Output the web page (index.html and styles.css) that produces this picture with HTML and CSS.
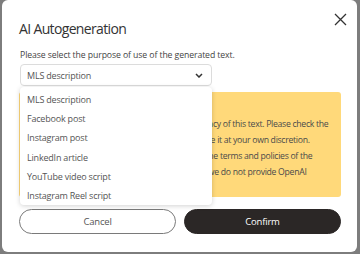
FILE: index.html
```html
<!DOCTYPE html>
<html>
<head>
<meta charset="utf-8">
<link rel="stylesheet" href="styles.css">
</head>
<body>
<div class="modal">
  <button class="close" aria-label="Close">
    <svg width="13" height="13" viewBox="0 0 13 13"><path d="M1 1L12 12M12 1L1 12" stroke="#333" stroke-width="1.3" fill="none"/></svg>
  </button>
  <h1 class="title">AI Autogeneration</h1>
  <p class="lead">Please select the purpose of use of the generated text.</p>
  <div class="field">
    <div class="select">
      <span>MLS description</span>
      <svg class="chev" width="8" height="5" viewBox="0 0 8 5"><path d="M1 1L4 4L7 1" stroke="#333" stroke-width="1.5" fill="none"/></svg>
    </div>
    <ul class="menu">
      <li>MLS description</li>
      <li>Facebook post</li>
      <li>Instagram post</li>
      <li>LinkedIn article</li>
      <li>YouTube video script</li>
      <li>Instagram Reel script</li>
    </ul>
  </div>
  <div class="notice">
    <p>Disclaimer<br>Please note that we cannot guarantee the accuracy of this text. Please check the<br>content very carefully before using, and distribute it at your own discretion.<br>When using this text, please comply in full with the terms and policies of the<br>OpenAI API service. Please kindly be aware that we do not provide OpenAI<br>support.</p>
  </div>
  <div class="actions">
    <button class="btn cancel">Cancel</button>
    <button class="btn confirm">Confirm</button>
  </div>
</div>
</body>
</html>
```
FILE: styles.css
```css
* { box-sizing: border-box; }
html, body { margin: 0; padding: 0; }
body {
  width: 360px;
  height: 254px;
  background: #7d7d7d;
  font-family: "Open Sans", "Noto Sans", sans-serif;
  overflow: hidden;
}
.modal {
  position: relative;
  margin: 0 3px 0 2px;
  height: 252px;
  background: #fff;
  border-radius: 6px;
  padding: 18px 16px 0 17px;
}
.close {
  position: absolute;
  top: 13px;
  right: 10px;
  border: 0;
  background: none;
  padding: 0;
  width: 13px;
  height: 13px;
  line-height: 0;
}
.title {
  margin: 0;
  font-size: 14px;
  letter-spacing: -0.65px;
  font-weight: 400;
  line-height: 22px;
  color: #333;
}
.lead {
  margin: 8px 0 0 1px;
  font-size: 8.7px;
  letter-spacing: -0.1px;
  line-height: 14px;
  color: #444;
}
.field {
  position: relative;
  margin: 2px 0 0 1px;
  width: 192px;
  z-index: 2;
}
.select {
  height: 22px;
  border: 1px solid #dcdcdc;
  border-radius: 4px;
  display: flex;
  align-items: center;
  justify-content: space-between;
  padding: 0 8px 0 6px;
  font-size: 9px;
  letter-spacing: -0.2px;
  color: #555;
}
.menu {
  position: absolute;
  top: 23px;
  left: 0;
  width: 192px;
  margin: 0;
  padding: 3px 0 0;
  list-style: none;
  background: #fff;
  border-radius: 4px;
  box-shadow: 0 1px 5px rgba(0,0,0,0.18);
}
.menu li {
  height: 19.2px;
  line-height: 19.2px;
  padding-left: 7px;
  font-size: 9px;
  letter-spacing: -0.2px;
  color: #555;
}
.notice {
  margin-top: 6px;
  height: 105px;
  background: #ffd97a;
  border-radius: 3px;
  padding: 8px 10px;
}
.notice p {
  margin: 0;
  font-size: 8.7px;
  letter-spacing: -0.3px;
  line-height: 16px;
  color: #4a4a4a;
  white-space: nowrap;
}
.actions {
  display: flex;
  gap: 8px;
  margin-top: 12px;
}
.btn {
  flex: 1;
  height: 25px;
  border-radius: 13px;
  font-family: inherit;
  font-size: 9.5px;
  letter-spacing: -0.2px;
  padding: 0;
}
.cancel {
  background: #fff;
  border: 1px solid #7a7a7a;
  color: #555;
}
.confirm {
  background: #2b2726;
  border: 1px solid #2b2726;
  color: #fff;
}
```
